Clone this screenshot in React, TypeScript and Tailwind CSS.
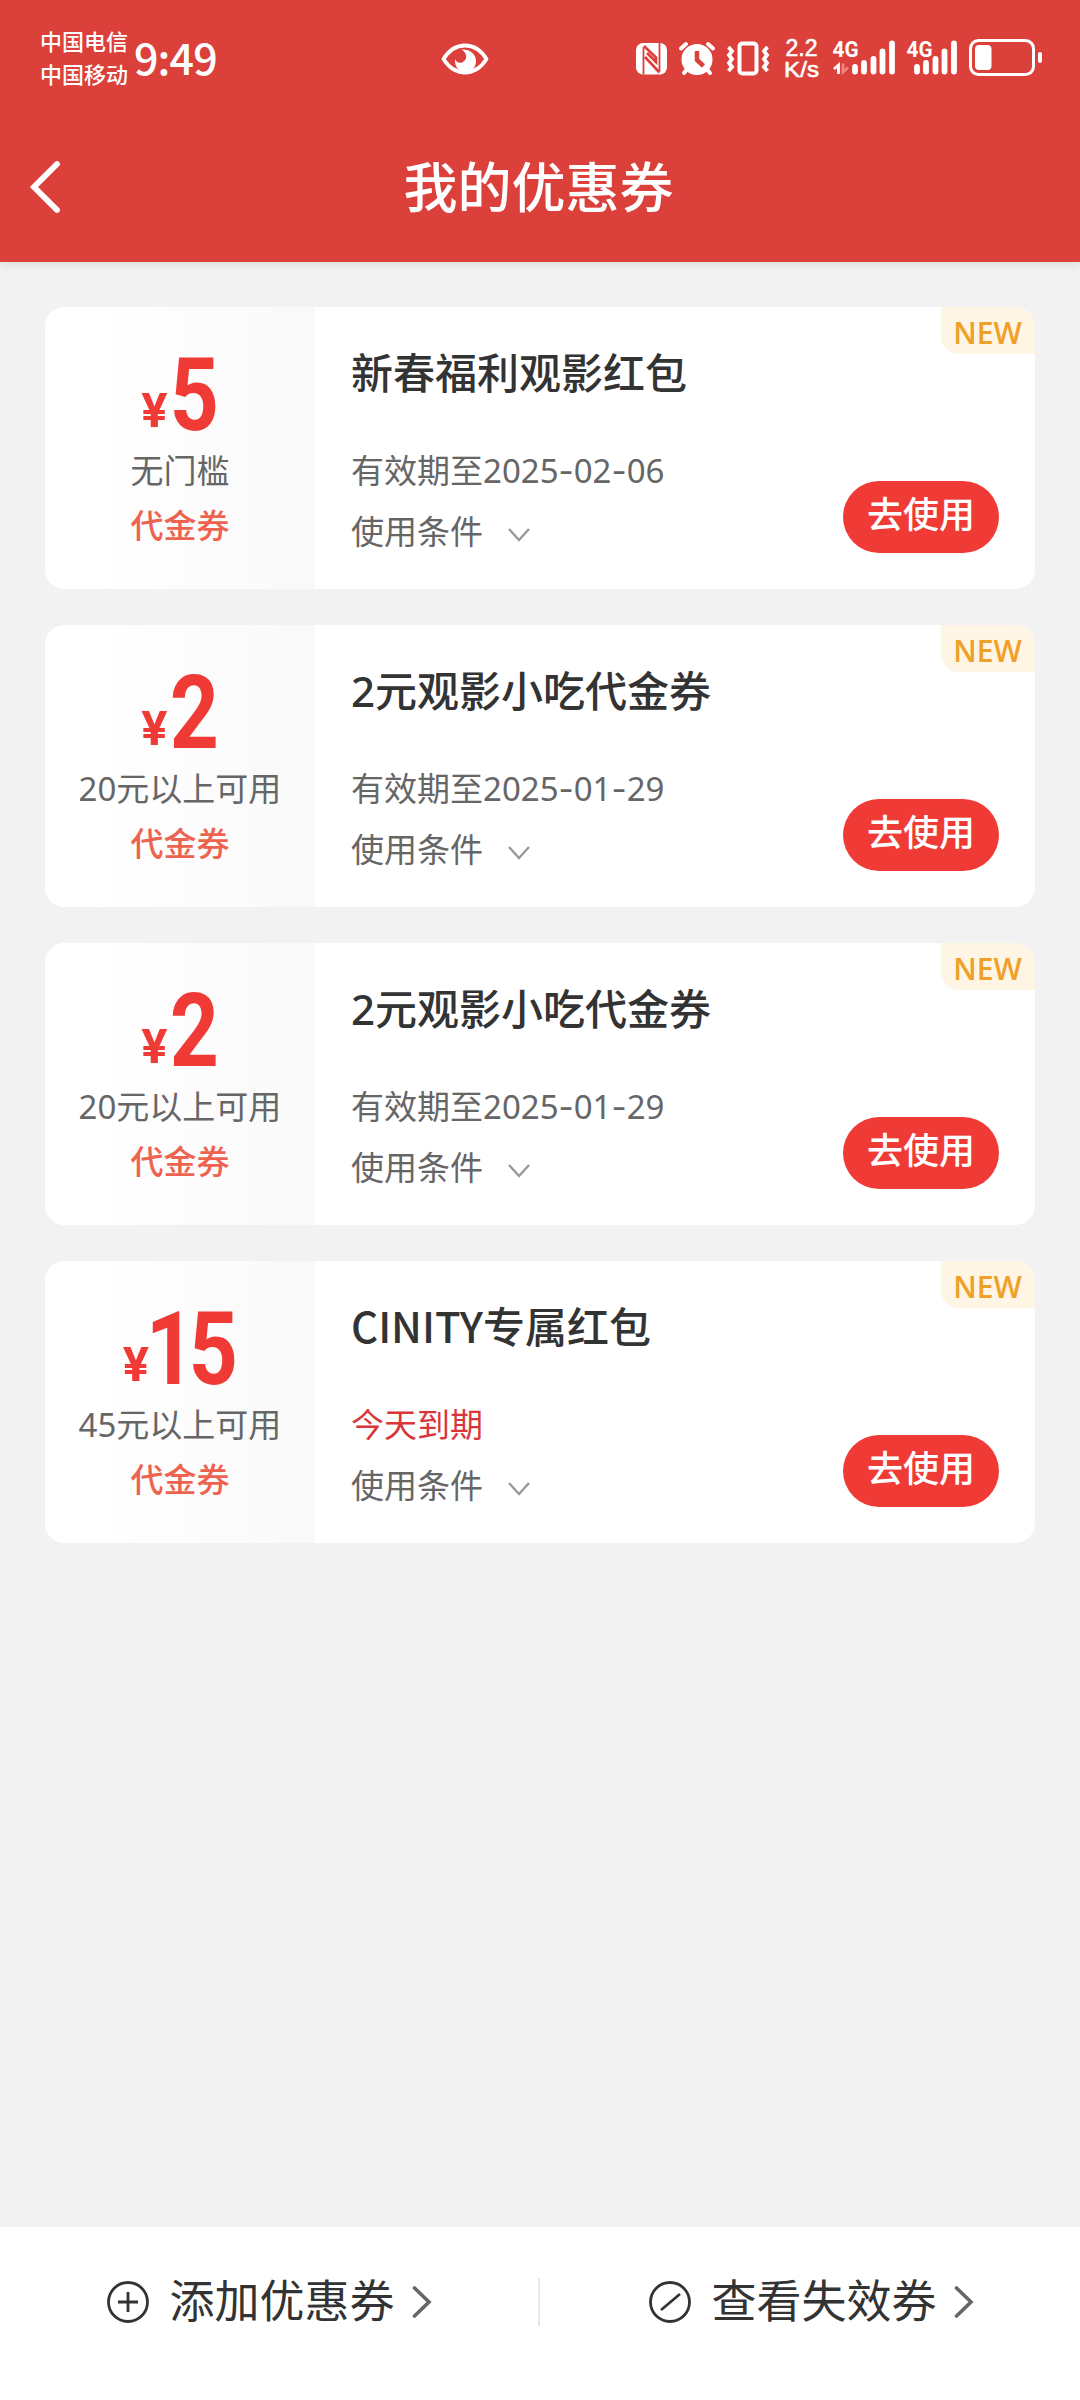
import React from "react";

type Coupon = {
  amount: string;
  limit: string;
  title: string;
  expiry: string;
  urgent?: boolean;
};

const coupons: Coupon[] = [
  { amount: "5", limit: "无门槛", title: "新春福利观影红包", expiry: "有效期至2025-02-06" },
  { amount: "2", limit: "20元以上可用", title: "2元观影小吃代金券", expiry: "有效期至2025-01-29" },
  { amount: "2", limit: "20元以上可用", title: "2元观影小吃代金券", expiry: "有效期至2025-01-29" },
  { amount: "15", limit: "45元以上可用", title: "CINITY专属红包", expiry: "今天到期", urgent: true },
];

function StatusBar() {
  return (
    <div className="flex h-[116px] items-start text-white">
      <div className="ml-[40px] mt-[24px] w-[90px] text-[22px] leading-[33px] font-medium">
        <div>中国电信</div>
        <div>中国移动</div>
      </div>
      <div className="ml-[4px] mt-[31px] w-[87px] text-[43px] leading-[50px] font-medium tracking-[-0.9px] whitespace-nowrap">
        9:49
      </div>
      <svg className="ml-[220px] mt-[42px]" width="48" height="34" viewBox="0 0 48 34" fill="none">
        <path d="M2.500 17Q11 3.500 24 3.500T45.500 17Q37 30.500 24 30.500T2.500 17Z" stroke="#fff" strokeWidth="3.800" strokeLinejoin="round" />
        <path d="M20.500 7.500C29 7 35 12 35 19C35 26 30 30 24.500 30C18 30 13.500 25 14 17C15 20 18 21.500 21 20.500C27 18 26.500 11 20.500 7.500Z" fill="#fff" />
      </svg>
      <svg className="ml-auto" width="200" height="100" viewBox="630 0 200 100" fill="none">
        <rect x="636" y="43" width="31" height="31.500" rx="7" fill="#fff" />
        <path d="M643.500 47V74.500M659.500 43V71" stroke="#db403a" strokeWidth="1.800" />
        <path d="M644 46L656 57.500V62L647 53M645 57L659.500 72.500" stroke="#db403a" strokeWidth="2.600" />
        <circle cx="697" cy="59.500" r="15.500" fill="#fff" />
        <path d="M681 48.500L686 44M713 48.500L708 44" stroke="#fff" strokeWidth="4" strokeLinecap="round" />
        <path d="M684 73L688 68M710 73L706 68" stroke="#fff" strokeWidth="4" strokeLinecap="round" />
        <path d="M697 51V60L703.500 66" stroke="#db403a" strokeWidth="4.500" />
        <rect x="739.500" y="43.500" width="17" height="30" rx="3" stroke="#fff" strokeWidth="4" />
        <path d="M728.500 47L732 51L729 55L732 59L729 63L732 67L728.500 71M767.500 47L764 51L767 55L764 59L767 63L764 67L767.500 71" stroke="#fff" strokeWidth="3.800" />
        <g fill="#fff" stroke="#fff" strokeWidth="0.600" fontFamily="'Liberation Sans', sans-serif">
          <text x="785.500" y="56" fontSize="23">2.2</text>
          <text x="784" y="77" fontSize="22" textLength="35" lengthAdjust="spacingAndGlyphs">K/s</text>
        </g>
      </svg>
      <svg width="250" height="100" viewBox="830 0 250 100" fill="none">
        <g fill="#fff" fontFamily="'Roboto', sans-serif" fontWeight="700">
          <text x="832.500" y="56.500" fontSize="22" textLength="26" lengthAdjust="spacingAndGlyphs">4G</text>
          <text x="906.500" y="56.500" fontSize="22" textLength="26" lengthAdjust="spacingAndGlyphs">4G</text>
        </g>
        <path d="M834 69L838.500 65V74" stroke="#fff" strokeWidth="2.800" />
        <path d="M843 63.500V72L848 67.500" stroke="#f08580" strokeWidth="2.800" />
        <path d="M855 67V71.500M864 63V71.500M873.500 59V71.500M882.500 51.500V71.500M892 43.500V71.500" stroke="#fff" strokeWidth="5.800" strokeLinecap="round" />
        <path d="M917 67V71.500M926 63V71.500M935.500 59V71.500M944.500 51.500V71.500M954 43.500V71.500" stroke="#fff" strokeWidth="5.800" strokeLinecap="round" />
        <rect x="970.500" y="40.500" width="63" height="34" rx="8" stroke="#fff" strokeWidth="3" />
        <rect x="975" y="45" width="16.500" height="25" rx="4" fill="#fff" />
        <rect x="1038" y="52" width="4" height="11" rx="2" fill="#fff" />
      </svg>
    </div>
  );
}

function ExpiryText({ text }: { text: string }) {
  return (
    <>
      {text.split("-").map((part, i) => (
        <React.Fragment key={i}>
          {i > 0 && <span className="font-['Inter']">-</span>}
          {part}
        </React.Fragment>
      ))}
    </>
  );
}

function Amount({ value }: { value: string }) {
  return (
    <div className="mt-[38px] flex h-[100px] items-baseline justify-center text-[#f03a35] font-bold font-['Roboto']">
      <span className="relative -top-[3px] mr-[3px] text-[49px] leading-[90px]">¥</span>
      {value.split("").map((digit, i) => (
        <span key={i} className={digit === "1" ? "flex w-[37px] justify-center" : "flex w-[48px] justify-center"}>
          <span className="inline-block scale-x-[0.84] text-[102px] leading-[100px]">{digit}</span>
        </span>
      ))}
    </div>
  );
}

function CouponCard({ coupon }: { coupon: Coupon }) {
  return (
    <article className="relative flex h-[282px] overflow-hidden rounded-[20px] bg-white">
      <div className="flex w-[270px] flex-col items-center bg-linear-to-r from-white from-20% to-[#f9f9f9]">
        <Amount value={coupon.amount} />
        <div className="mt-[1px] text-[33px] leading-[50px] text-[#666]">{coupon.limit}</div>
        <div className="mt-[5px] text-[33px] leading-[50px] font-medium text-[#ee6350]">代金券</div>
      </div>
      <div className="flex flex-1 flex-col pl-[36px]">
        <h2
          className={
            coupon.title.startsWith("C")
              ? "mt-[34px] mb-[2px] text-[42px] leading-[60px] font-medium text-[#333] font-['Noto_Sans_CJK_SC',sans-serif]"
              : "mt-[36px] text-[42px] leading-[60px] font-medium text-[#333]"
          }
        >
          {coupon.title}
        </h2>
        <p className={coupon.urgent ? "mt-[43px] text-[33px] leading-[50px] text-[#d9363a]" : "mt-[43px] text-[33px] leading-[50px] text-[#666]"}>
          <ExpiryText text={coupon.expiry} />
        </p>
        <div className="mt-[11px] flex items-center text-[33px] leading-[50px] text-[#666]">
          使用条件
          <svg className="ml-[24px] mt-[6px]" width="24" height="16" viewBox="0 0 24 16" fill="none">
            <path d="M2 2L12 13L22 2" stroke="#999" strokeWidth="2.400" />
          </svg>
        </div>
      </div>
      <button className="mr-[36px] mt-[174px] h-[72px] w-[156px] rounded-full bg-[#f03a35] pb-[4px] text-[36px] leading-[60px] font-medium text-white">
        去使用
      </button>
      <span className="absolute top-0 right-0 h-[47px] w-[94px] rounded-bl-[18px] bg-[#fff5e4] pr-[1px] text-center text-[30px] leading-[52px] font-semibold text-[#efa02a] font-['Open_Sans']">
        NEW
      </span>
    </article>
  );
}

function FooterAction({ label, children }: { label: string; children: React.ReactNode }) {
  return (
    <button className="flex h-[150px] flex-1 items-center justify-center text-[45px] leading-[60px] text-[#333]">
      <svg width="44" height="44" viewBox="0 0 44 44" fill="none" stroke="#333" strokeWidth="2.800">
        <circle cx="22" cy="22" r="19.500" />
        {children}
      </svg>
      <span className="mr-[17px] ml-[19px] -mt-[3px]">{label}</span>
      <svg width="20" height="34" viewBox="0 0 20 34" fill="none">
        <path d="M2.500 3L17 17L2.500 31" stroke="#666" strokeWidth="3.600" strokeLinecap="round" />
      </svg>
    </button>
  );
}

export default function App() {
  return (
    <div className="flex h-[2400px] w-[1080px] flex-col bg-[#f2f2f2] font-['Noto_Sans','Noto_Sans_CJK_SC',sans-serif]">
      <header className="h-[262px] bg-[#db403a] shadow-[0_2px_10px_rgba(0,0,0,0.1)] font-['Noto_Sans_CJK_SC',sans-serif]">
        <StatusBar />
        <div className="flex h-[142px] items-center text-white">
          <svg className="ml-[29px]" width="34" height="54" viewBox="0 0 34 54" fill="none">
            <path d="M28 4L5 27L28 50" stroke="#fff" strokeWidth="5.800" strokeLinecap="round" />
          </svg>
          <h1 className="mr-[66px] -mt-[5px] flex-1 text-center text-[54px] leading-[80px] font-medium">我的优惠券</h1>
        </div>
      </header>
      <main className="flex flex-1 flex-col gap-[36px] px-[45px] pt-[45px]">
        {coupons.map((c, i) => (
          <CouponCard key={i} coupon={c} />
        ))}
      </main>
      <footer className="flex h-[173px] bg-white">
        <FooterAction label="添加优惠券">
          <path d="M12 22H32M22 12V32" />
        </FooterAction>
        <span className="mt-[51px] mr-[2px] h-[48px] w-[2px] bg-[#e8e8e8]" />
        <FooterAction label="查看失效券">
          <path d="M13 30L32 14" />
        </FooterAction>
      </footer>
    </div>
  );
}
